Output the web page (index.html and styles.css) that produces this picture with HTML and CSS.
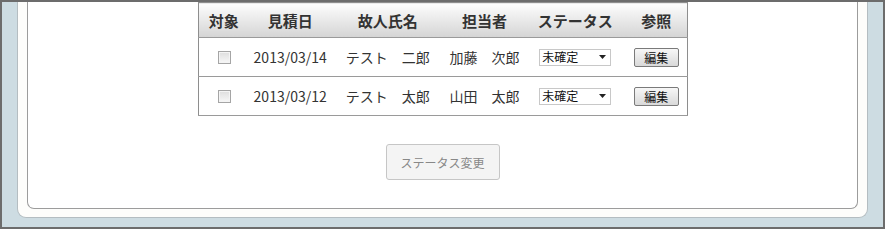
FILE: index.html
```html
<!DOCTYPE html>
<html lang="ja">
<head>
<meta charset="utf-8">
<title>見積一覧</title>
<link rel="stylesheet" href="styles.css">
</head>
<body>
<div class="frame">
  <div class="outer-panel">
    <div class="inner-panel">
      <table class="list">
        <colgroup>
          <col class="c1"><col class="c2"><col class="c3"><col class="c4"><col class="c5"><col class="c6">
        </colgroup>
        <thead>
          <tr>
            <th>対象</th><th>見積日</th><th>故人氏名</th><th>担当者</th><th>ステータス</th><th>参照</th>
          </tr>
        </thead>
        <tbody>
          <tr>
            <td><input type="checkbox" class="cb"></td>
            <td>2013/03/14</td>
            <td>テスト　二郎</td>
            <td>加藤　次郎</td>
            <td><div class="select"><span>未確定</span><svg width="7" height="4" viewBox="0 0 7 4"><path d="M0 0H7L3.5 4Z" fill="#222"/></svg></div></td>
            <td><button class="edit">編集</button></td>
          </tr>
          <tr>
            <td><input type="checkbox" class="cb"></td>
            <td>2013/03/12</td>
            <td>テスト　太郎</td>
            <td>山田　太郎</td>
            <td><div class="select"><span>未確定</span><svg width="7" height="4" viewBox="0 0 7 4"><path d="M0 0H7L3.5 4Z" fill="#222"/></svg></div></td>
            <td><button class="edit">編集</button></td>
          </tr>
        </tbody>
      </table>
      <div class="actions">
        <button class="change">ステータス変更</button>
      </div>
    </div>
  </div>
</div>
</body>
</html>
```

FILE: styles.css
```css
html, body {
  margin: 0;
  padding: 0;
}
body {
  font-family: "Noto Sans CJK JP", "Noto Sans", sans-serif;
  color: #333;
}
.frame {
  box-sizing: border-box;
  width: 885px;
  height: 229px;
  border: 2px solid #6c6c6c;
  background: #cddce2;
  padding: 0 15px 7px 15px;
  overflow: hidden;
}
.outer-panel {
  background: #fdfdfb;
  border: 1px solid #b4bdc1;
  border-top: none;
  border-radius: 0 0 9px 9px;
  padding: 0 9px 8px 9px;
}
.inner-panel {
  background: #fff;
  border: 1px solid #9c9c9c;
  border-top: none;
  border-radius: 0 0 7px 7px;
  padding: 0 0 28px 0;
  display: flex;
  flex-direction: column;
  align-items: center;
}
.list {
  border-collapse: collapse;
  table-layout: fixed;
  width: 490px;
  border: 1px solid #8e8e8e;
}
.c1 { width: 51px; }
.c2 { width: 82px; }
.c3 { width: 113px; }
.c4 { width: 80px; }
.c5 { width: 101px; }
.c6 { width: 61px; }
.list th {
  height: 34px;
  padding: 0;
  font-size: 15px;
  font-weight: bold;
  color: #333;
  text-align: center;
  background: linear-gradient(#fdfdfd, #d4d4d4);
  border-bottom: 1px solid #9a9a9a;
}
.list td {
  height: 38px;
  padding: 0;
  font-size: 14px;
  text-align: center;
  border-bottom: 1px solid #9a9a9a;
  white-space: nowrap;
}
.cb {
  appearance: none;
  -webkit-appearance: none;
  width: 13px;
  height: 13px;
  margin: 4px 0 0 2px;
  border: 1px solid #a5a5a5;
  background: linear-gradient(#dedede, #f7f7f7);
  box-shadow: inset 0 0 0 1px #f4f4f4;
  vertical-align: top;
}
.select {
  box-sizing: border-box;
  width: 72px;
  height: 17px;
  margin: 0 auto;
  border: 1px solid #c8c8c8;
  background: #fff;
  display: flex;
  align-items: center;
  justify-content: space-between;
  padding: 0 4px 0 2px;
  font-size: 12px;
  color: #111;
}
.select span {
  line-height: 1;
}
.edit {
  box-sizing: border-box;
  width: 45px;
  height: 19px;
  padding: 0;
  border: 1px solid #7a7a7a;
  border-radius: 2px;
  background: linear-gradient(#f7f7f7, #d9d9d9);
  font-family: "Noto Sans CJK JP", sans-serif;
  font-size: 12px;
  line-height: 1;
  color: #111;
}
.actions {
  margin-top: 28px;
}
.change {
  box-sizing: border-box;
  width: 114px;
  height: 36px;
  padding: 0;
  border: 1px solid #c6c6c6;
  border-radius: 3px;
  background: #f4f4f4;
  font-family: "Noto Sans CJK JP", sans-serif;
  font-size: 12px;
  color: #888;
}
```
